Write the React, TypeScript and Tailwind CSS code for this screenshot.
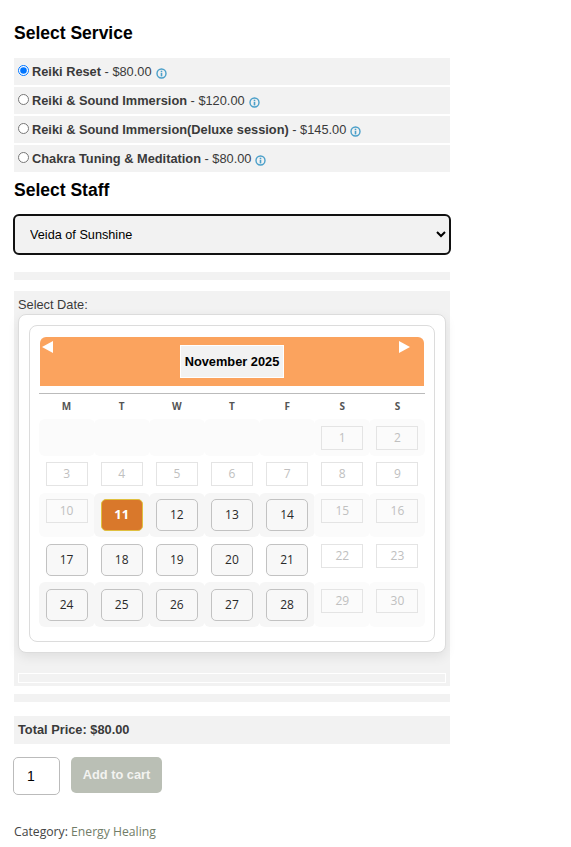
const sans = "font-['Liberation_Sans',Arial,sans-serif]";

function Info() {
  return (
    <svg width="11" height="11" viewBox="0 0 11 11" className="inline-block ml-[4px] relative top-[0.5px]">
      <circle cx="5.5" cy="5.5" r="4.5" fill="none" stroke="#4a9fc9" strokeWidth="1.4" />
      <rect x="4.7" y="2.7" width="1.6" height="1.3" fill="#4a9fc9" />
      <rect x="4.7" y="4.7" width="1.6" height="3.7" fill="#4a9fc9" />
    </svg>
  );
}

const services = [
  { name: "Reiki Reset", price: "$80.00", pad: "" },
  { name: "Reiki & Sound Immersion", price: "$120.00", pad: "" },
  { name: "Reiki & Sound Immersion(Deluxe session)", price: "$145.00", pad: "" },
  { name: "Chakra Tuning & Meditation", price: "$80.00", pad: "pt-[1px]" },
];

function Service({ name, price, checked, pad }: { name: string; price: string; checked: boolean; pad: string }) {
  return (
    <div className={`h-[27px] bg-[#f2f2f2] flex items-center pl-[4px] text-[12.8px] text-[#3a3a3a] ${pad}`}>
      <input type="radio" name="svc" defaultChecked={checked} className="w-[11px] h-[11px] mr-[3px] mb-[3px] shrink-0" />
      <span className="whitespace-nowrap">
        <b className="font-bold">{name}</b> - {price}
        <Info />
      </span>
    </div>
  );
}

type Kind = "empty" | "off" | "on" | "sel";

function Cell({ d, kind, band, pt }: { d?: number; kind: Kind; band: "" | "light" | "mid"; pt: string }) {
  const bg = band === "mid" ? "bg-[#f6f6f6]" : band === "light" ? "bg-[#fbfbfb]" : "";
  return (
    <div className={`${bg} ${pt} rounded-[6px] flex justify-center items-start font-['Open_Sans',sans-serif] ml-[-0.5px] mr-[-0.5px]`}>
      {kind === "off" && (
        <div className="w-[42px] h-[24px] border border-[#e4e4e4] flex items-center justify-center text-[12px] text-[#c0c0c0]">{d}</div>
      )}
      {kind === "on" && (
        <div className="w-[42px] h-[32px] rounded-[5px] border border-[#c2c2c2] bg-[#f8f8f8] flex items-center justify-center text-[12px] font-medium text-[#2a2a2a]">{d}</div>
      )}
      {kind === "sel" && (
        <div className="w-[42px] h-[32px] rounded-[5px] border border-[#e0c040] bg-[#d9782b] flex items-center justify-center text-[13px] font-bold text-white">{d}</div>
      )}
    </div>
  );
}

const rows: { d?: number; kind: Kind; band: "" | "light" | "mid" }[][] = [
  [
    ...[0, 0, 0, 0, 0].map(() => ({ kind: "empty" as Kind, band: "light" as const })),
    { d: 1, kind: "off", band: "light" },
    { d: 2, kind: "off", band: "light" },
  ],
  [3, 4, 5, 6, 7, 8, 9].map((d) => ({ d, kind: "off" as Kind, band: "" as const })),
  [
    { d: 10, kind: "off", band: "light" },
    { d: 11, kind: "sel", band: "mid" },
    { d: 12, kind: "on", band: "mid" },
    { d: 13, kind: "on", band: "mid" },
    { d: 14, kind: "on", band: "mid" },
    { d: 15, kind: "off", band: "light" },
    { d: 16, kind: "off", band: "light" },
  ],
  [
    ...[17, 18, 19, 20, 21].map((d) => ({ d, kind: "on" as Kind, band: "" as const })),
    { d: 22, kind: "off", band: "" },
    { d: 23, kind: "off", band: "" },
  ],
  [
    ...[24, 25, 26, 27, 28].map((d) => ({ d, kind: "on" as Kind, band: "mid" as const })),
    { d: 29, kind: "off", band: "light" },
    { d: 30, kind: "off", band: "light" },
  ],
];

const heights = ["h-[37px]", "h-[37px]", "h-[44px]", "h-[45px]", "h-[45px]"];
const tops = ["pt-[7px]", "pt-[6px]", "pt-[6px]", "pt-[7px]", "pt-[7px]"];

export default function App() {
  return (
    <div className={`${sans} w-[571px] h-[847px] overflow-hidden bg-white relative`}>
      <div className="w-[436px] ml-[14px] pt-[23px]">
        <h2 className="text-[17.5px] leading-[20px] font-bold text-black">Select Service</h2>
        <div className="mt-[15px] flex flex-col gap-[2px]">
          {services.map((s, i) => (
            <Service key={s.name} name={s.name} price={s.price} pad={s.pad} checked={i === 0} />
          ))}
        </div>
        <h2 className="mt-[8px] text-[17.5px] leading-[20px] font-bold text-black">Select Staff</h2>
        <select className="mt-[14px] ml-[-1px] w-[438px] h-[41px] rounded-[6px] border-2 border-[#111] bg-[#f2f2f2] text-[12.7px] text-black pl-[11px]">
          <option>Veida of Sunshine</option>
        </select>
        <div className="mt-[17px] h-[8px] bg-[#f2f2f2]" />
        <div className="mt-[11px] h-[395px] bg-[#f2f2f2] px-[4px] pt-[6px]">
          <div className="text-[12.8px] leading-[16px] text-[#3a3a3a]">Select Date:</div>
          <div className="mt-[1px] h-[339px] rounded-[8px] border border-[#dcdcdc] bg-white p-[10px] shadow-[0_4px_12px_rgba(0,0,0,0.08)]">
            <div className="h-[317px] rounded-[8px] border border-[#dcdcdc] bg-white px-[10px] pt-[11px]">
              <div className="relative h-[49px] bg-[#fba35e] rounded-t-[6px] flex items-start justify-center pt-[8px]">
                <svg width="11" height="12" viewBox="0 0 11 12" className="absolute left-[2px] top-[4px]">
                  <path d="M11 0V12L0 6Z" fill="#fff" />
                </svg>
                <div className="w-[104px] h-[33px] bg-[#f2f2f2] border border-white flex items-center justify-center text-[12.8px] font-bold text-black whitespace-nowrap">
                  November 2025
                </div>
                <svg width="11" height="12" viewBox="0 0 11 12" className="absolute right-[14px] top-[4px]">
                  <path d="M0 0V12L11 6Z" fill="#fff" />
                </svg>
              </div>
              <div className="mt-[7px] ml-[-1px] w-[386px] border-t border-[#bbb]" />
              <div className="ml-[-1px] w-[386px] grid grid-cols-7 h-[25px] items-center font-['Open_Sans',sans-serif] text-[10px] font-bold text-[#555] text-center">
                {["M", "T", "W", "T", "F", "S", "S"].map((d, i) => (
                  <div key={i}>{d}</div>
                ))}
              </div>
              <div className="ml-[-1px] w-[386px]">
                {rows.map((r, i) => (
                  <div key={i} className={`grid grid-cols-7 ${heights[i]}`}>
                    {r.map((c, j) => (
                      <Cell key={j} d={c.d} kind={c.kind} band={c.band} pt={tops[i]} />
                    ))}
                  </div>
                ))}
              </div>
            </div>
          </div>
          <div className="mt-[20px] h-[10px] border border-white" />
        </div>
        <div className="mt-[8px] h-[8px] bg-[#f2f2f2]" />
        <div className="mt-[14px] h-[28px] bg-[#f2f2f2] flex items-center pl-[4px] text-[12.8px] font-bold text-[#3a3a3a]">
          Total Price: $80.00
        </div>
        <div className="mt-[13px] flex items-start ml-[-1px]">
          <input
            defaultValue="1"
            className="w-[47px] h-[38px] rounded-[5px] border border-[#bbb] bg-white text-[14px] text-black pl-[13px] outline-none"
          />
          <button className="ml-[11px] w-[91px] h-[36px] rounded-[5px] bg-[#babfb5] text-[12.8px] font-bold text-[#f3f3f0]">
            Add to cart
          </button>
        </div>
        <div className="mt-[28px] font-['Open_Sans',sans-serif] text-[12.2px] leading-[18px] text-[#444]">
          Category: <span className="text-[#727d68]">Energy Healing</span>
        </div>
      </div>
    </div>
  );
}
